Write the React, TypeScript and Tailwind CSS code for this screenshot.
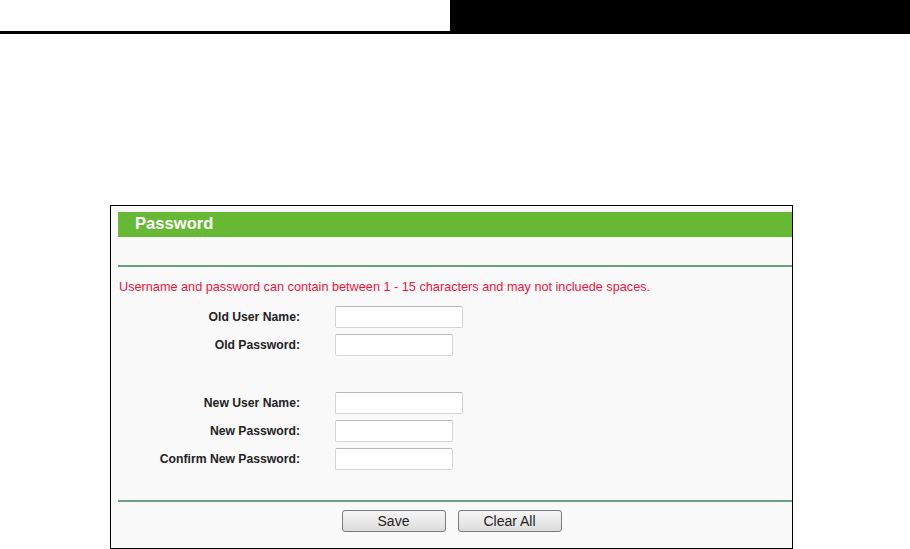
export default function App() {
  const font = { fontFamily: '"Liberation Sans", Arial, sans-serif' };
  const Row = ({ label, w }: { label: string; w: string }) => (
    <div className="flex items-center h-[22px]">
      <div className="w-[182px] text-right text-[12.2px] font-bold text-[#222]">{label}</div>
      <input
        type="text"
        className={`ml-[35px] h-[22px] ${w} bg-white border border-[#d4d4d4] border-t-[#b8b8b8] rounded-[2px] outline-none`}
      />
    </div>
  );
  return (
    <div className="w-[910px] h-[549px] bg-white overflow-hidden" style={font}>
      <div className="flex h-[34px]">
        <div className="w-[450px] border-b-[3px] border-black" />
        <div className="flex-1 bg-black" />
      </div>
      <div className="ml-[110px] mt-[171px] w-[683px] h-[344px] border border-black bg-[#f9f9f9] pt-[6px] pl-[7px] flex flex-col">
        <div className="h-[25px] bg-[#67b834] text-white font-bold text-[16.6px] pl-[17px] flex items-center">
          Password
        </div>
        <div className="mt-[28px] h-[2px] bg-[#6a9f80]" />
        <div className="mt-[12px] h-[16px] leading-[16px] pl-[1px] text-[12.7px] text-[#f0143a]">
          Username and password can contain between 1 - 15 characters and may not incluede spaces.
        </div>
        <div className="mt-[11px] flex flex-col gap-[6px]">
          <Row label="Old User Name:" w="w-[128px]" />
          <Row label="Old Password:" w="w-[118px]" />
        </div>
        <div className="mt-[36px] flex flex-col gap-[6px]">
          <Row label="New User Name:" w="w-[128px]" />
          <Row label="New Password:" w="w-[118px]" />
          <Row label="Confirm New Password:" w="w-[118px]" />
        </div>
        <div className="mt-[30px] h-[2px] bg-[#6a9f80]" />
        <div className="mt-[8px] flex justify-center gap-[12px] pr-[7px]">
          <button className="w-[104px] h-[22px] text-[14px] text-[#222] border border-[#7a7a7a] rounded-[3px] bg-gradient-to-b from-[#f6f6f6] to-[#dcdcdc] leading-none">
            Save
          </button>
          <button className="w-[104px] h-[22px] text-[14px] text-[#222] border border-[#7a7a7a] rounded-[3px] bg-gradient-to-b from-[#f6f6f6] to-[#dcdcdc] leading-none">
            Clear All
          </button>
        </div>
      </div>
    </div>
  );
}
